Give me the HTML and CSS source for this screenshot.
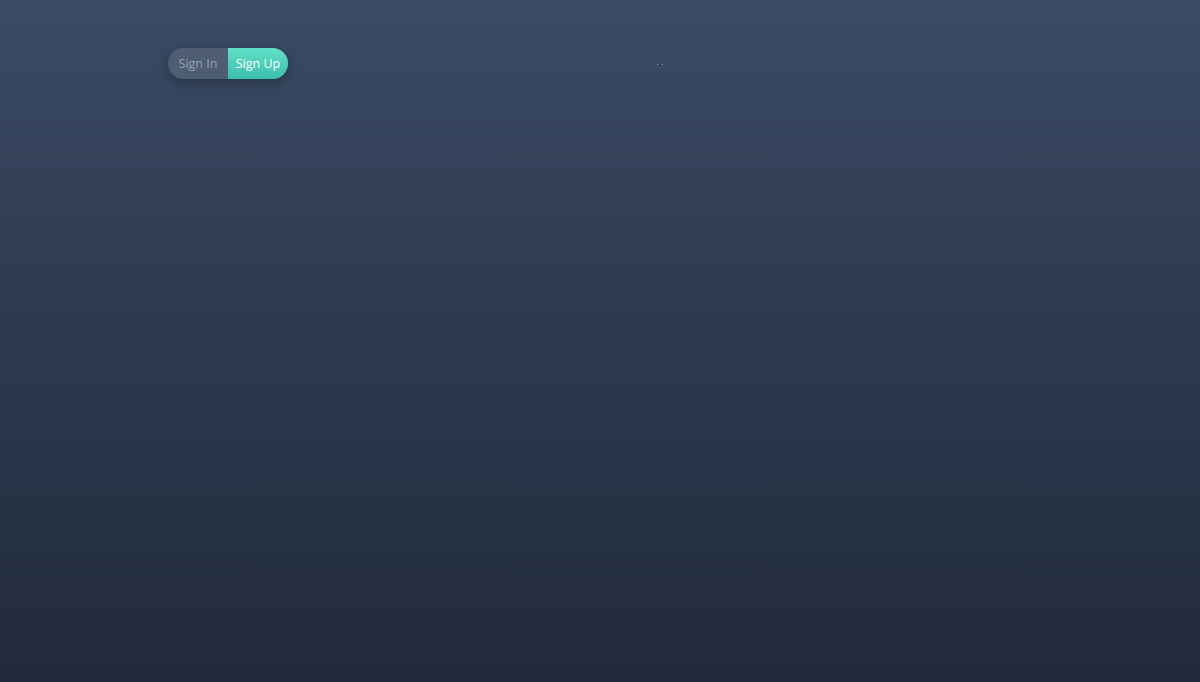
FILE: index.html
```html
<!DOCTYPE html>
<html>
<head>
<meta charset="utf-8">
<link rel="stylesheet" href="styles.css">
</head>
<body>
<div class="page">
  <header class="top">
    <div class="toggle">
      <button class="tab tab-in">Sign In</button>
      <button class="tab tab-up">Sign Up</button>
    </div>
    <div class="dots"><span class="dot"></span><span class="dot"></span></div>
  </header>
</div>
</body>
</html>
```
FILE: styles.css
```css
html, body {
  margin: 0;
  padding: 0;
  height: 100%;
}
body {
  background: linear-gradient(to bottom, #3b4b64 0%, #2d3b51 45%, #212a3a 100%);
  font-family: "Open Sans", "Liberation Sans", sans-serif;
  overflow: hidden;
}
.page {
  width: 1200px;
  height: 682px;
}
.top {
  display: flex;
  align-items: center;
  padding: 48px 0 0 168px;
}
.toggle {
  display: flex;
  height: 31px;
  border-radius: 16px;
  background: rgba(120, 135, 155, 0.35);
  box-shadow: 0 4px 12px rgba(10, 20, 35, 0.35);
}
.tab {
  border: none;
  margin: 0;
  padding: 0;
  height: 31px;
  width: 60px;
  font-family: inherit;
  font-size: 12.5px;
  background: transparent;
  cursor: pointer;
}
.tab-in {
  color: #97a3b3;
  border-radius: 16px 0 0 16px;
}
.tab-up {
  color: #ffffff;
  background: linear-gradient(to bottom, #5fe0c6, #3cbfae);
  border-radius: 0 16px 16px 0;
}
.dots {
  display: flex;
  gap: 4px;
  margin-left: 369px;
  margin-top: 2px;
}
.dot {
  width: 1px;
  height: 1px;
  background: #8a96a8;
}
```
